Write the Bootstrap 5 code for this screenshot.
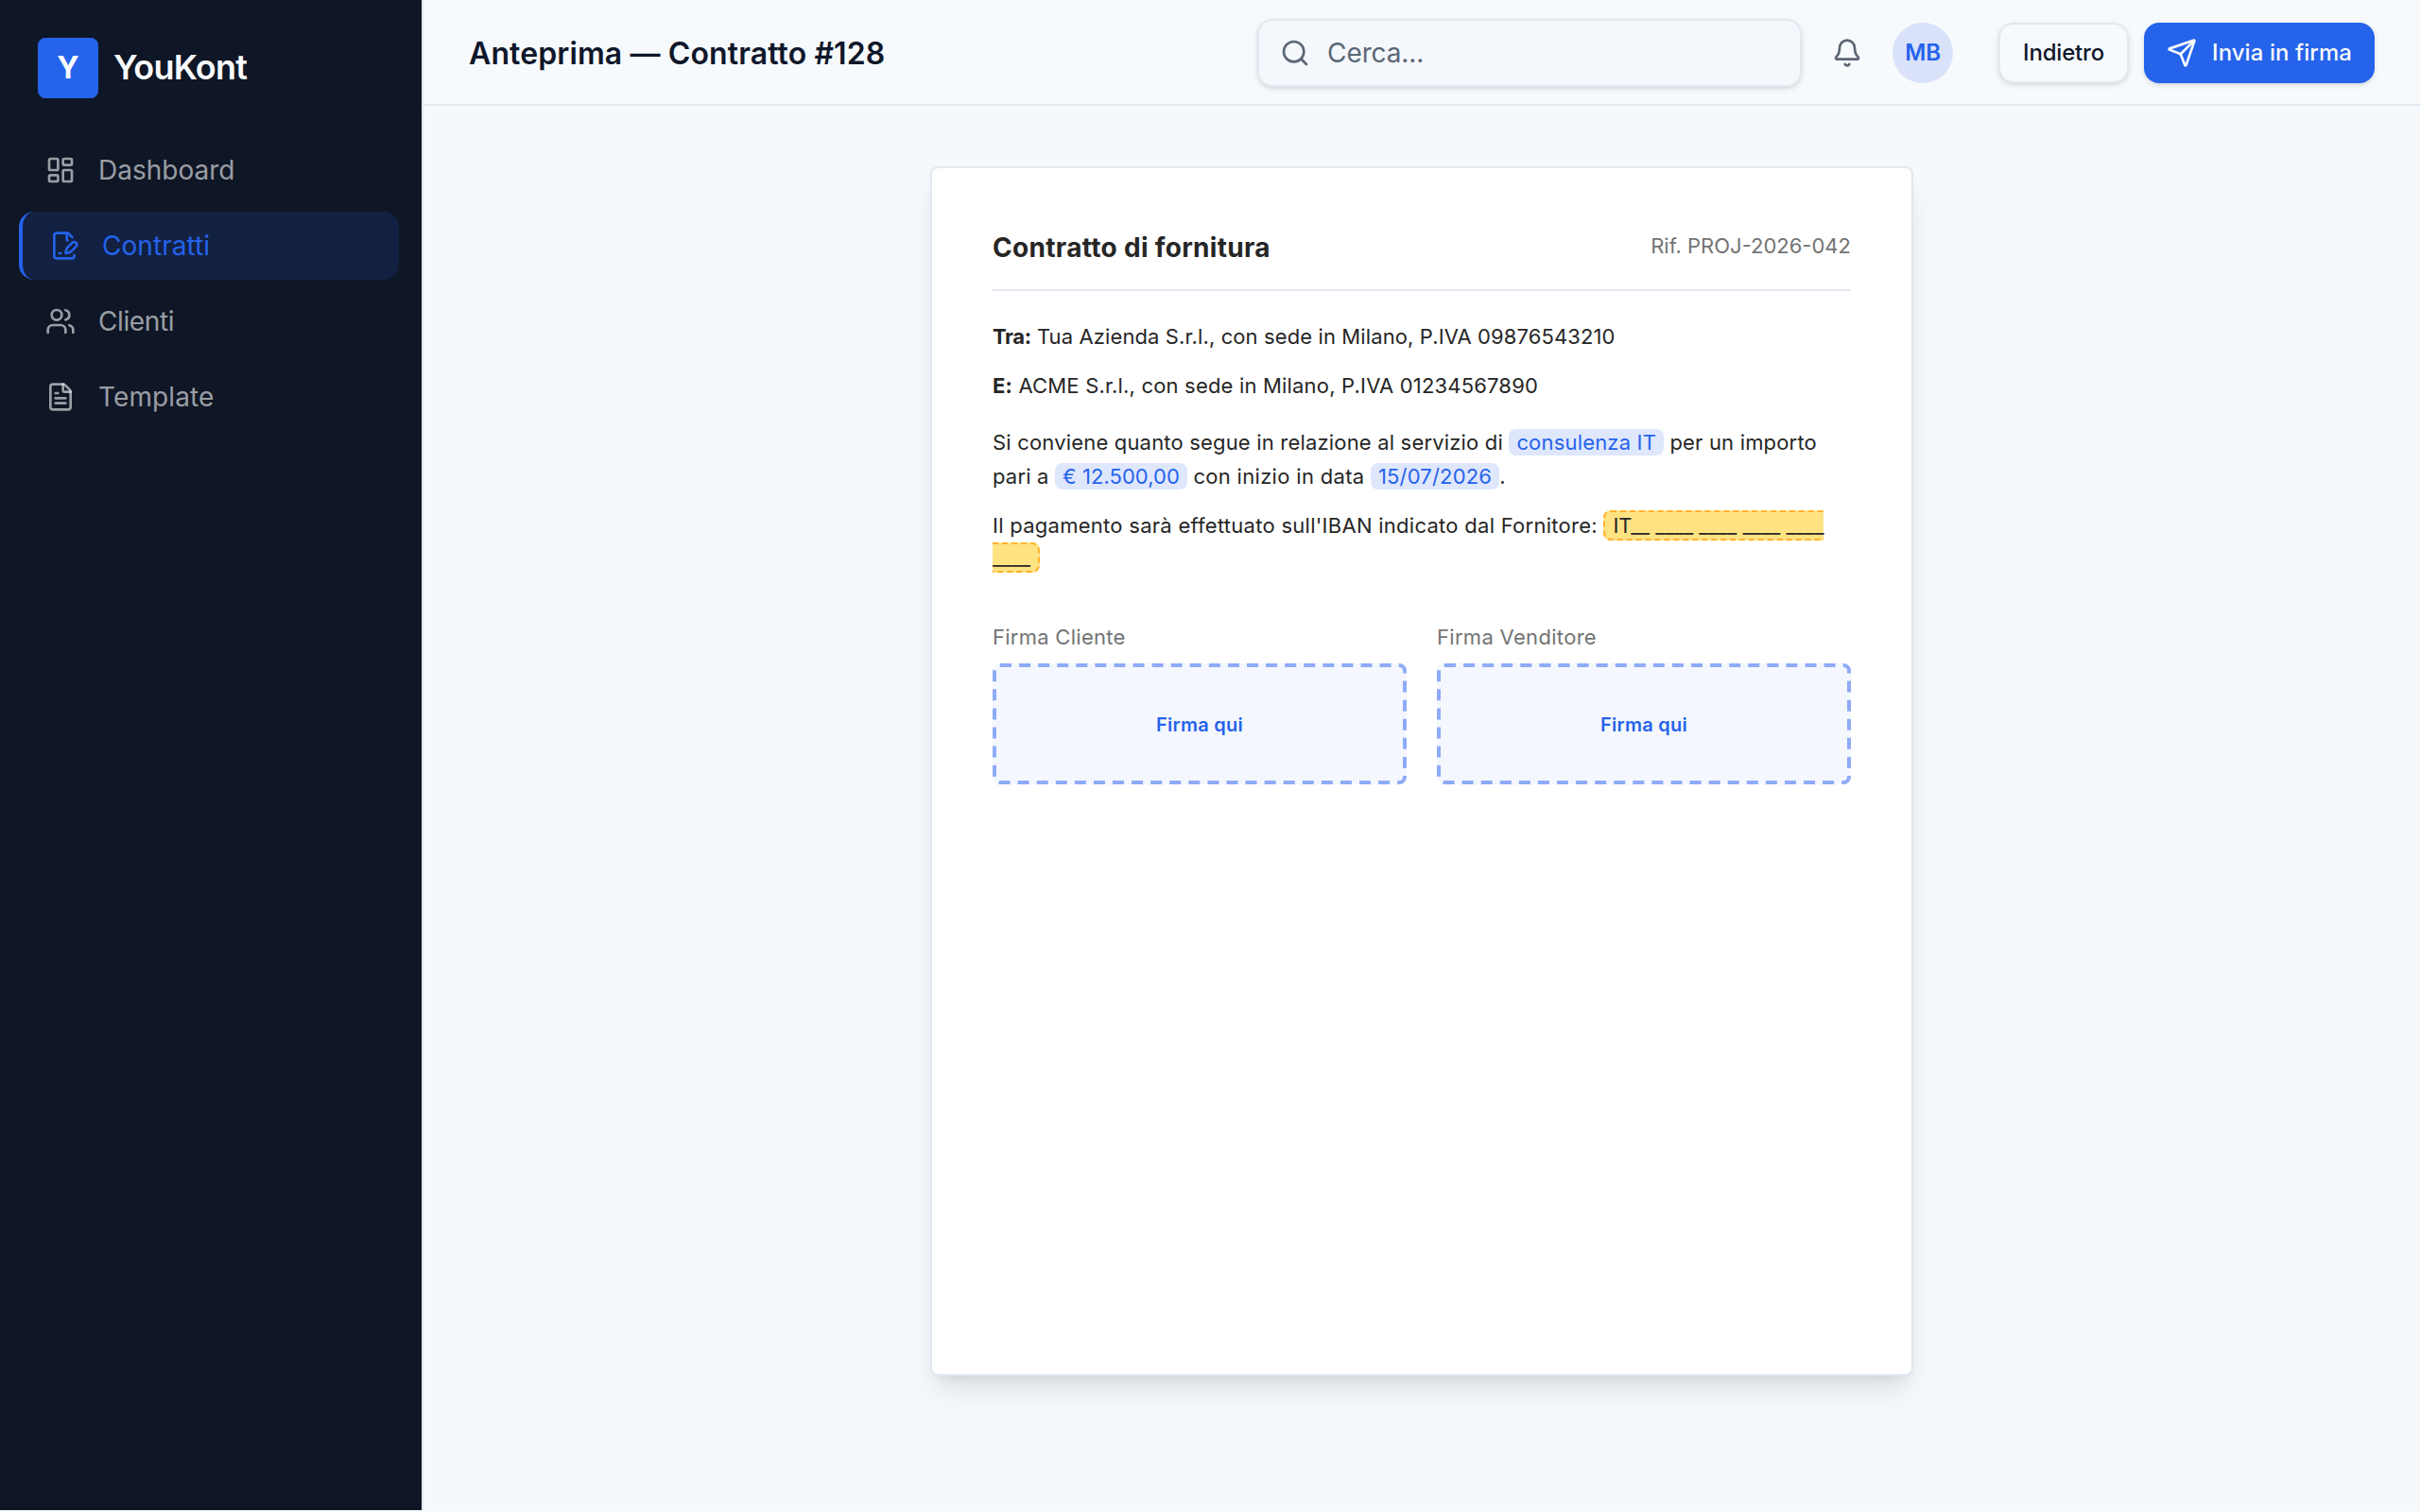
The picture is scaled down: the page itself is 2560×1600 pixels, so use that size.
<!DOCTYPE html>
<html lang="it">
<head>
<meta charset="utf-8">
<title>YouKont — Anteprima contratto</title>
<meta name="viewport" content="width=device-width, initial-scale=1">
<link href="https://cdn.jsdelivr.net/npm/bootstrap@5.3.0/dist/css/bootstrap.min.css" rel="stylesheet">
<style>
  :root { --brand: #2563eb; --line: #e2e8f0; --ink: #0f172a; --side: #0f1625; --muted-ink: #5b6675; }
  body { font-family: Inter, "Liberation Sans", sans-serif; background: #f7fafd; color: var(--ink); height: 1600px; overflow: hidden; }
  svg.ico { width: 32px; height: 32px; flex: none; fill: none; stroke: currentColor; stroke-width: 2; stroke-linecap: round; stroke-linejoin: round; }

  /* letter spacing steps */
  .ls-n4 { letter-spacing: -.4px; }
  .ls-n1 { letter-spacing: -.12px; }
  .ls-0 { letter-spacing: .05px; }
  .ls-1 { letter-spacing: .11px; }
  .ls-2 { letter-spacing: .18px; }
  .ls-3 { letter-spacing: .27px; }
  .ls-4 { letter-spacing: .31px; }

  /* sidebar */
  .sidebar { width: 448px; height: 1598px; background: var(--side); border-right: 2px solid var(--line); padding: 40px 24px 0 20px; }
  .brand-row { height: 64px; gap: 16px; margin-bottom: 40px; padding-left: 20px; }
  .brand-tile { width: 64px; height: 64px; border-radius: 8px; background: var(--brand); color: #f8fafc; font-size: 32px; font-weight: 700; }
  .brand-name { color: #f8fafc; font-size: 36px; font-weight: 600; letter-spacing: -.8px; line-height: 56px; padding-top: 3px; }
  .side-nav { gap: 8px; }
  .side-nav .nav-link { height: 72px; padding: 0 28px; gap: 24px; border-radius: 16px; font-size: 28px; color: rgba(248,250,252,.6); }
  .side-nav .nav-link.active { border-left: 4px solid var(--brand); background: rgba(37,99,235,.15); color: var(--brand); }

  /* top bar */
  .topbar { height: 112px; border-bottom: 2px solid var(--line); padding: 2px 48px 0; }
  .page-title { font-size: 32px; font-weight: 600; line-height: 56px; padding-top: 2px; }
  .tools { gap: 32px; }
  .bell { color: var(--muted-ink); }
  .search-box { width: 576px; height: 72px; border: 2px solid var(--line); border-radius: 16px; background: #f4f7fc; padding: 0 22px; gap: 18px; color: var(--muted-ink); font-size: 28px; }
  .lift { box-shadow: 0 2px 6px rgba(0,0,0,.1), 0 2px 4px -2px rgba(0,0,0,.1); }
  .avatar { width: 64px; height: 64px; background: #d9e2f9; color: var(--brand); font-size: 24px; font-weight: 600; }
  .btn-top { height: 64px; border-radius: 16px; font-size: 24px; font-weight: 500; padding: 0 24px; gap: 16px; line-height: 32px; }
  .btn-back { border: 2px solid var(--line); color: var(--ink); background: #f7fafd; margin-left: 16px; letter-spacing: -.19px; }
  .btn-send { border: 0; background: var(--brand); color: #f8fafc; margin-left: -16px; letter-spacing: .06px; }

  /* document */
  .stage { background: #f5f9fc; padding-top: 64px; height: 1486px; }
  .sheet { width: 1040px; height: 1280px; background: #fff; border: 2px solid var(--line); border-radius: 8px; padding: 64px; color: #262626; font-size: 22px;
    box-shadow: 0 20px 30px -6px rgba(0,0,0,.1), 0 8px 12px -8px rgba(0,0,0,.1); }
  .sheet-head { height: 66px; border-bottom: 2px solid var(--line); margin-bottom: 30px; }
  .sheet-head h2 { font-size: 28px; font-weight: 700; line-height: 40px; margin: 0; }
  .soft { color: #737373; }
  .sheet-ref { padding-top: 2px; }
  .sheet p { margin: 0; line-height: 36px; }
  .sheet p.iban { line-height: 34px; margin-top: 17px; }
  .field-fill { background: #dfe7fc; color: var(--brand); border-radius: 8px; padding: 1px 8px; }
  .field-open { background: #ffe282; border: 2px dashed #ffb12e; border-radius: 8px; padding: 1px 8px; letter-spacing: -.05px; }
  .sign-row { gap: 32px; margin-top: 51px; }
  .sign-col { flex: 1 1 0; min-width: 0; }
  .sign-label { margin-bottom: 11px; }
  .sign-box { height: 128px; border-radius: 8px; background: #f4f7fe; color: var(--brand); font-size: 20px; font-weight: 600; padding-top: 1px; }
  .sign-box svg { fill: none; stroke: #8eabf7; stroke-width: 4; stroke-dasharray: 12 8.08; }
</style>
</head>
<body class="d-flex align-items-start">
  <aside class="sidebar flex-shrink-0">
    <div class="brand-row d-flex">
      <div class="brand-tile d-flex align-items-center justify-content-center">Y</div>
      <div class="brand-name">YouKont</div>
    </div>
    <nav class="side-nav nav flex-column">
      <a class="nav-link d-flex align-items-center"><svg class="ico" viewBox="0 0 24 24"><rect width="7" height="9" x="3" y="3" rx="1"/><rect width="7" height="5" x="14" y="3" rx="1"/><rect width="7" height="9" x="14" y="12" rx="1"/><rect width="7" height="5" x="3" y="16" rx="1"/></svg><span>Dashboard</span></a>
      <a class="nav-link active d-flex align-items-center"><svg class="ico" viewBox="0 0 24 24"><path d="M14.364 13.634a2 2 0 0 0-.506.854l-.837 2.87a.5.5 0 0 0 .62.62l2.87-.837a2 2 0 0 0 .854-.506l4.013-4.009a1 1 0 0 0-3.004-3.004z"/><path d="M14.487 7.858A1 1 0 0 1 14 7V2"/><path d="M20 19.645V20a2 2 0 0 1-2 2H6a2 2 0 0 1-2-2V4a2 2 0 0 1 2-2h8a2.4 2.4 0 0 1 1.704.706l2.516 2.516"/><path d="M8 18h1"/></svg><span class="ls-0">Contratti</span></a>
      <a class="nav-link d-flex align-items-center"><svg class="ico" viewBox="0 0 24 24"><path d="M16 21v-2a4 4 0 0 0-4-4H6a4 4 0 0 0-4 4v2"/><path d="M16 3.128a4 4 0 0 1 0 7.744"/><path d="M22 21v-2a4 4 0 0 0-3-3.87"/><circle cx="9" cy="7" r="4"/></svg><span class="ls-n4">Clienti</span></a>
      <a class="nav-link d-flex align-items-center"><svg class="ico" viewBox="0 0 24 24"><path d="M6 22a2 2 0 0 1-2-2V4a2 2 0 0 1 2-2h8a2.4 2.4 0 0 1 1.704.706l3.588 3.588A2.4 2.4 0 0 1 20 8v12a2 2 0 0 1-2 2z"/><path d="M14 2v5a1 1 0 0 0 1 1h5"/><path d="M10 9H8"/><path d="M16 13H8"/><path d="M16 17H8"/></svg><span class="ls-1">Template</span></a>
    </nav>
  </aside>

  <div class="flex-grow-1">
    <header class="topbar d-flex align-items-center">
      <h1 class="page-title mb-0 me-auto ls-1">Anteprima — Contratto #128</h1>
      <div class="tools d-flex align-items-center">
        <div class="search-box lift d-flex align-items-center"><svg class="ico" viewBox="0 0 24 24"><path d="m21 21-4.34-4.34"/><circle cx="11" cy="11" r="8"/></svg><span class="ls-n1">Cerca...</span></div>
        <svg class="ico bell" viewBox="0 0 24 24"><path d="M10.268 21a2 2 0 0 0 3.464 0"/><path d="M3.262 15.326A1 1 0 0 0 4 17h16a1 1 0 0 0 .74-1.673C19.41 13.956 18 12.499 18 8A6 6 0 0 0 6 8c0 4.499-1.411 5.956-2.738 7.326"/></svg>
        <div class="avatar rounded-circle d-flex align-items-center justify-content-center">MB</div>
        <button class="btn btn-top btn-back lift d-flex align-items-center">Indietro</button>
        <button class="btn btn-top btn-send lift d-flex align-items-center"><svg class="ico" viewBox="0 0 24 24"><path d="M14.536 21.686a.5.5 0 0 0 .937-.024l6.5-19a.496.496 0 0 0-.635-.635l-19 6.5a.5.5 0 0 0-.024.937l7.93 3.18a2 2 0 0 1 1.112 1.11z"/><path d="m21.854 2.147-10.94 10.939"/></svg>Invia in firma</button>
      </div>
    </header>
    <main class="stage d-flex justify-content-center align-items-start">
      <article class="sheet">
        <div class="sheet-head d-flex justify-content-between">
          <h2 class="ls-4">Contratto di fornitura</h2>
          <span class="sheet-ref soft">Rif. PROJ-2026-042</span>
        </div>
        <p class="mb-3 ls-1"><strong class="ls-n4">Tra:</strong> Tua Azienda S.r.l., con sede in Milano, P.IVA 09876543210</p>
        <p class="mb-4 ls-2"><strong>E:</strong> ACME S.r.l., con sede in Milano, P.IVA 01234567890</p>
        <p class="ls-2">Si conviene quanto segue in relazione al servizio di <span class="field-fill">consulenza IT</span> per un importo pari a <span class="field-fill ls-0">€ 12.500,00</span><span class="ls-4"> con inizio in data </span><span class="field-fill">15/07/2026</span>.</p>
        <p class="iban ls-3">Il pagamento sarà effettuato sull'IBAN indicato dal Fornitore: <span class="field-open">IT__ ____ ____ ____ ____ ____</span></p>
        <div class="sign-row d-flex">
          <div class="sign-col">
            <div class="sign-label soft ls-3">Firma Cliente</div>
            <div class="sign-box position-relative d-flex align-items-center justify-content-center ls-3"><svg class="position-absolute top-0 start-0" width="438" height="128"><rect x="2" y="2" width="434" height="124" rx="6"/></svg><span>Firma qui</span></div>
          </div>
          <div class="sign-col">
            <div class="sign-label soft ls-4">Firma Venditore</div>
            <div class="sign-box position-relative d-flex align-items-center justify-content-center ls-3"><svg class="position-absolute top-0 start-0" width="438" height="128"><rect x="2" y="2" width="434" height="124" rx="6"/></svg><span>Firma qui</span></div>
          </div>
        </div>
      </article>
    </main>
  </div>
<script src="https://cdn.jsdelivr.net/npm/bootstrap@5.3.0/dist/js/bootstrap.bundle.min.js"></script>
</body>
</html>
